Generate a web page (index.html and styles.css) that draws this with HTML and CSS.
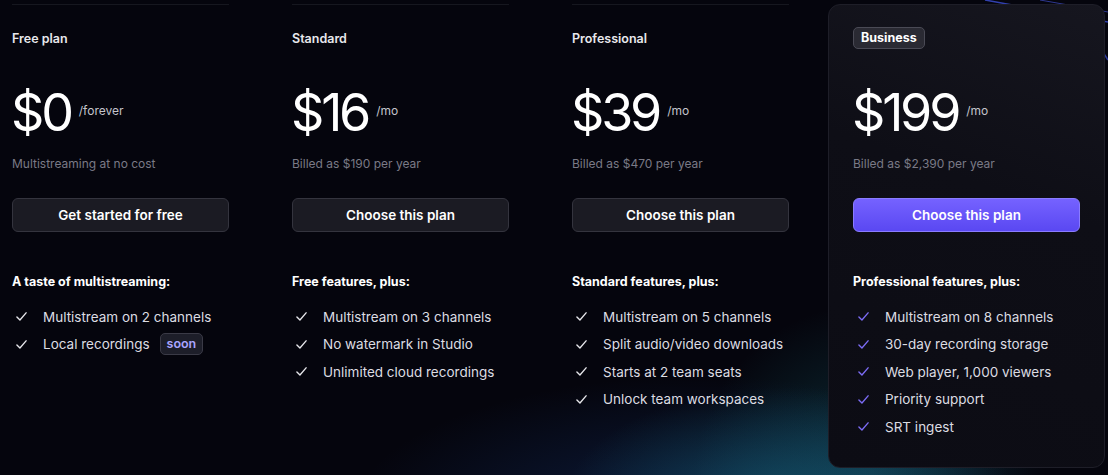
FILE: index.html
```html
<!DOCTYPE html>
<html lang="en">
<head>
  <meta charset="UTF-8">
  <title>Pricing</title>
  <meta name="viewport" content="width=device-width, initial-scale=1.0">
  <link rel="stylesheet" href="styles.css">
</head>
<body>
  <div class="glow">
    <svg width="1108" height="475" viewBox="0 0 1108 475">
      <path d="M985 0 L1108 22" stroke="#3d4fd6" stroke-width="1.5" opacity="0.8"/>
      <path d="M1040 0 L1108 12" stroke="#4a5ae8" stroke-width="1" opacity="0.6"/>
      <path d="M1095 40 L1108 60" stroke="#3d4fd6" stroke-width="1.5" opacity="0.7"/>
    </svg>
  </div>
  <div class="plans">
    <div class="plan">
      <div class="plan-head"><span class="plan-name">Free plan</span></div>
      <div class="price"><span class="amount">$0</span><span class="per">/forever</span></div>
      <p class="note">Multistreaming at no cost</p>
      <button class="btn">Get started for free</button>
      <h4 class="feat-title">A taste of multistreaming:</h4>
      <ul class="features">
        <li><svg class="check" viewBox="0 0 12 12"><path d="M1 6.5 L4.3 9.8 L11 2"/></svg>Multistream on 2 channels</li>
        <li><svg class="check" viewBox="0 0 12 12"><path d="M1 6.5 L4.3 9.8 L11 2"/></svg>Local recordings <span class="soon">soon</span></li>
      </ul>
    </div>
    <div class="plan">
      <div class="plan-head"><span class="plan-name">Standard</span></div>
      <div class="price"><span class="amount">$16</span><span class="per">/mo</span></div>
      <p class="note">Billed as $190 per year</p>
      <button class="btn">Choose this plan</button>
      <h4 class="feat-title">Free features, plus:</h4>
      <ul class="features">
        <li><svg class="check" viewBox="0 0 12 12"><path d="M1 6.5 L4.3 9.8 L11 2"/></svg>Multistream on 3 channels</li>
        <li><svg class="check" viewBox="0 0 12 12"><path d="M1 6.5 L4.3 9.8 L11 2"/></svg>No watermark in Studio</li>
        <li><svg class="check" viewBox="0 0 12 12"><path d="M1 6.5 L4.3 9.8 L11 2"/></svg>Unlimited cloud recordings</li>
      </ul>
    </div>
    <div class="plan">
      <div class="plan-head"><span class="plan-name">Professional</span></div>
      <div class="price"><span class="amount">$39</span><span class="per">/mo</span></div>
      <p class="note">Billed as $470 per year</p>
      <button class="btn">Choose this plan</button>
      <h4 class="feat-title">Standard features, plus:</h4>
      <ul class="features">
        <li><svg class="check" viewBox="0 0 12 12"><path d="M1 6.5 L4.3 9.8 L11 2"/></svg>Multistream on 5 channels</li>
        <li><svg class="check" viewBox="0 0 12 12"><path d="M1 6.5 L4.3 9.8 L11 2"/></svg>Split audio/video downloads</li>
        <li><svg class="check" viewBox="0 0 12 12"><path d="M1 6.5 L4.3 9.8 L11 2"/></svg>Starts at 2 team seats</li>
        <li><svg class="check" viewBox="0 0 12 12"><path d="M1 6.5 L4.3 9.8 L11 2"/></svg>Unlock team workspaces</li>
      </ul>
    </div>
    <div class="plan featured">
      <div class="plan-head"><span class="plan-name badge">Business</span></div>
      <div class="price"><span class="amount">$199</span><span class="per">/mo</span></div>
      <p class="note">Billed as $2,390 per year</p>
      <button class="btn primary">Choose this plan</button>
      <h4 class="feat-title">Professional features, plus:</h4>
      <ul class="features">
        <li><svg class="check" viewBox="0 0 12 12"><path d="M1 6.5 L4.3 9.8 L11 2"/></svg>Multistream on 8 channels</li>
        <li><svg class="check" viewBox="0 0 12 12"><path d="M1 6.5 L4.3 9.8 L11 2"/></svg>30-day recording storage</li>
        <li><svg class="check" viewBox="0 0 12 12"><path d="M1 6.5 L4.3 9.8 L11 2"/></svg>Web player, 1,000 viewers</li>
        <li><svg class="check" viewBox="0 0 12 12"><path d="M1 6.5 L4.3 9.8 L11 2"/></svg>Priority support</li>
        <li><svg class="check" viewBox="0 0 12 12"><path d="M1 6.5 L4.3 9.8 L11 2"/></svg>SRT ingest</li>
      </ul>
    </div>
  </div>
</body>
</html>
```

FILE: styles.css
```css
html, body {
  margin: 0;
  padding: 0;
}
body {
  width: 1108px;
  height: 475px;
  overflow: hidden;
  position: relative;
  font-family: Inter, "Noto Sans", sans-serif;
  color: #e6e6ea;
  background:
    radial-gradient(ellipse 300px 150px at 790px 500px, rgba(22, 100, 120, 0.6), transparent 75%),
    radial-gradient(ellipse 440px 180px at 700px 520px, rgba(20, 52, 112, 0.5), transparent 80%),
    radial-gradient(ellipse 220px 220px at 870px 480px, rgba(24, 112, 122, 0.4), transparent 80%),
    #05050d;
}
.glow {
  position: absolute;
  top: 0;
  left: 0;
  pointer-events: none;
}
.glow svg {
  display: block;
}
.plans {
  position: relative;
  display: flex;
  padding: 4px 0 0 12px;
  gap: 63px;
}
.plan {
  width: 217px;
  display: flex;
  flex-direction: column;
  align-items: flex-start;
  padding-top: 22px;
  border-top: 1px solid #16171f;
}
.plan-head {
  height: 22px;
  display: flex;
  align-items: center;
}
.plan-name {
  font-size: 12.5px;
  font-weight: 600;
  color: #e8e8ec;
}
.badge {
  padding: 0 7px;
  line-height: 20px;
  border: 1px solid #4a4a55;
  border-radius: 5px;
  background: #2a2a33;
  color: #fff;
  font-weight: 700;
}
.price {
  margin-top: 38px;
  display: flex;
  align-items: flex-start;
  gap: 8px;
}
.amount {
  font-size: 52px;
  line-height: 52px;
  font-weight: 400;
  letter-spacing: -3.2px;
  margin-left: -1px;
  color: #fff;
}
.per {
  font-size: 12px;
  line-height: 18px;
  padding-top: 15px;
  color: #c4c4cc;
}
.note {
  margin: 16px 0 0;
  font-size: 12px;
  line-height: 18px;
  color: #7a7a86;
}
.btn {
  margin-top: 25px;
  width: 100%;
  height: 34px;
  border: 1px solid #34343e;
  border-radius: 6px;
  background: #1b1b23;
  color: #fff;
  font-family: inherit;
  font-size: 13.5px;
  font-weight: 600;
}
.btn.primary {
  border-color: #8a7cff;
  background: linear-gradient(#7562ff, #5a48f2);
}
.feat-title {
  margin: 41px 0 0;
  font-size: 12.5px;
  line-height: 18px;
  font-weight: 700;
  color: #fff;
}
.features {
  list-style: none;
  margin: 12px 0 0;
  padding: 0;
}
.features li {
  display: flex;
  align-items: center;
  height: 27.5px;
  font-size: 13.5px;
  color: #dcdce2;
  white-space: nowrap;
}
.check {
  width: 11px;
  height: 11px;
  margin: 0 16px 0 4px;
  fill: none;
  stroke: #e6e6ea;
  stroke-width: 1.5;
  stroke-linecap: round;
  stroke-linejoin: round;
}
.soon {
  margin-left: 10px;
  padding: 0 6px;
  line-height: 20px;
  border: 1px solid #3a3a46;
  border-radius: 5px;
  background: #1d1e29;
  color: #a9a4ff;
  font-size: 12.5px;
  font-weight: 600;
}
.featured {
  width: 227px;
  margin-left: -24px;
  padding: 22px 24px 26px;
  border: 1px solid #1e1e28;
  border-radius: 12px;
  background: linear-gradient(200deg, #16161f 0%, #0e0e16 40%, #0c0c14 100%);
}
.featured .feat-title {
  margin-top: 41px;
}
.featured .check {
  stroke: #7c6cf5;
  margin-left: 5px;
}
```
